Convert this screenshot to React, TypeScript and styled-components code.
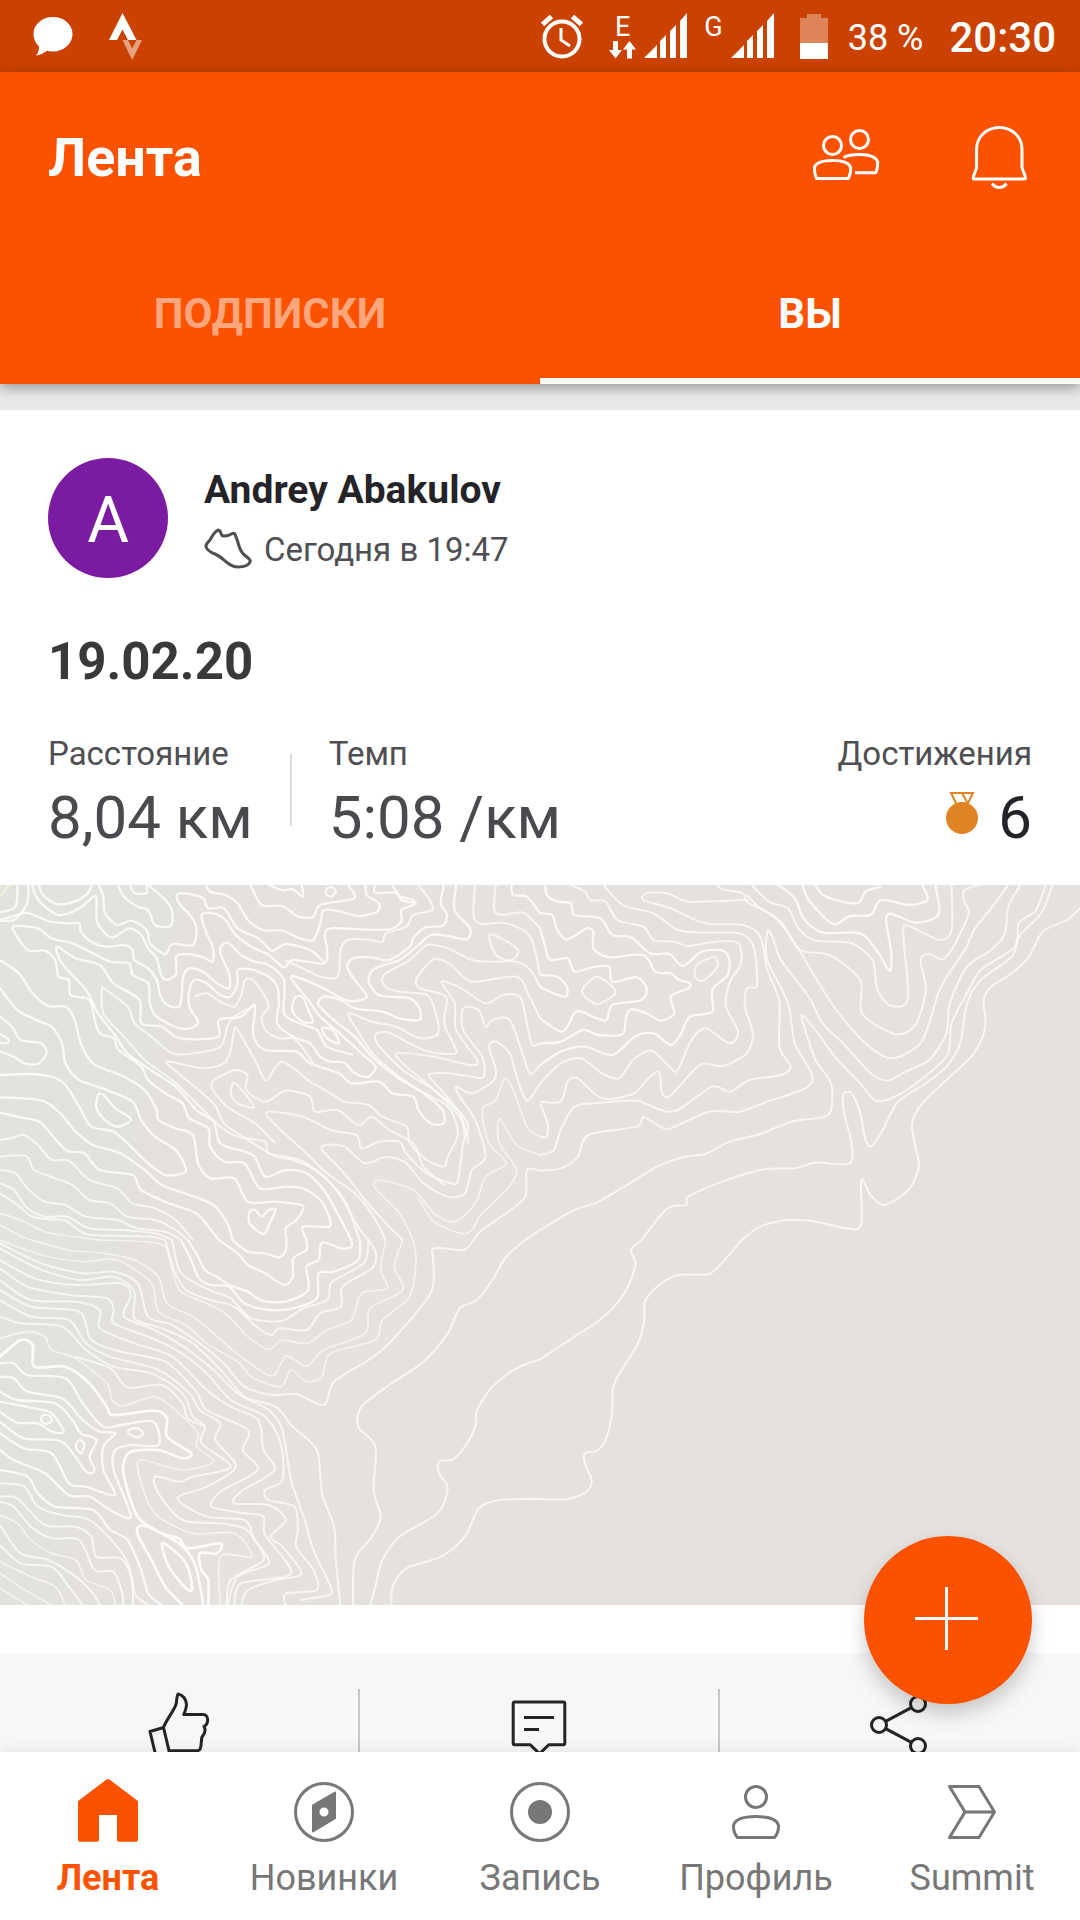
import React from "react";
import styled, { createGlobalStyle } from "styled-components";

const GlobalStyle = createGlobalStyle`
  *, *::before, *::after { box-sizing: border-box; }
  body { margin: 0; background: #ffffff; }
  body, button, a { font-family: Roboto, "Noto Sans", sans-serif; }
  button { padding: 0; border: 0; background: none; color: inherit; cursor: pointer; }
  h1, h2, p, dl, dt, dd { margin: 0; font-weight: 400; }
  svg { display: block; flex: none; }
`;

const orange = "#fc5200";

const Screen = styled.div`
  position: relative;
  display: flex;
  flex-direction: column;
  height: 100vh;
  overflow: hidden;
  background: #e9e9e9;
`;

/* ---------- Status bar ---------- */

const StatusBar = styled.div`
  display: flex;
  flex: none;
  align-items: center;
  justify-content: space-between;
  height: 72px;
  padding: 0 24px 0 33px;
  background: #cb4200;
  color: #ffffff;
`;

const StatusGroup = styled.div<{ $gap: number }>`
  display: flex;
  align-items: center;
  gap: ${(p) => p.$gap}px;
`;

const Network = styled.div`
  display: flex;
  align-items: flex-start;
  gap: 8px;
  height: 46px;
`;

const NetworkType = styled.span`
  display: flex;
  flex-direction: column;
  align-items: center;
  font: 400 27px/28px Roboto, sans-serif;
`;

const BatteryLevel = styled.span`
  font-size: 36px;
  line-height: 52px;
  padding-top: 4px;
`;

const Clock = styled.time`
  font-size: 42px;
  font-weight: 500;
  line-height: 52px;
  padding-top: 4px;
`;

/* ---------- Header ---------- */

const Header = styled.header`
  position: relative;
  z-index: 1;
  flex: none;
  background: ${orange};
  color: #ffffff;
  box-shadow: 0 4px 12px rgba(0, 0, 0, 0.35);
`;

const Toolbar = styled.div`
  display: flex;
  align-items: center;
  justify-content: space-between;
  height: 172px;
  padding: 0 45px 0 48px;
`;

const ScreenTitle = styled.h1`
  font-size: 54px;
  font-weight: 700;
  line-height: 64px;
`;

const ToolbarActions = styled.div`
  display: flex;
  gap: 81px;
`;

const Tabs = styled.div`
  display: flex;
`;

const Tab = styled.button<{ $active?: boolean }>`
  flex: 1;
  height: 140px;
  padding-bottom: 2px;
  color: ${(p) => (p.$active ? "#ffffff" : "#ffa67c")};
  font-size: 42px;
  font-weight: 700;
  box-shadow: ${(p) => (p.$active ? "inset 0 -6px #ffffff" : "none")};
`;

/* ---------- Feed ---------- */

const Feed = styled.main`
  flex: 1;
  min-height: 0;
  padding-top: 26px;
  overflow-y: auto;
  scrollbar-width: none;
`;

const Card = styled.article`
  background: #ffffff;
`;

const CardBody = styled.div`
  padding: 48px 48px 31px;
`;

const Athlete = styled.div`
  display: flex;
  gap: 36px;
`;

const Avatar = styled.div`
  display: grid;
  place-items: center;
  width: 120px;
  height: 120px;
  padding-top: 4px;
  border-radius: 50%;
  background: #7b1ba1;
  color: #ffffff;
  font-size: 64px;
`;

const AthleteName = styled.h2`
  color: #242428;
  font-size: 39px;
  font-weight: 700;
  line-height: 64px;
`;

const ActivityTime = styled.p`
  display: flex;
  align-items: center;
  gap: 12px;
  color: #4f4f53;
  font-size: 33px;
  line-height: 56px;
`;

const ActivityTitle = styled.h2`
  margin-top: 54px;
  color: #39393b;
  font-size: 51px;
  font-weight: 700;
  line-height: 60px;
`;

const Stats = styled.dl`
  display: flex;
  gap: 37px;
  margin-top: 42px;
`;

const Stat = styled.div<{ $end?: boolean }>`
  display: flex;
  flex-direction: column;
  gap: 8px;
  align-items: ${(p) => (p.$end ? "flex-end" : "flex-start")};
  margin-left: ${(p) => (p.$end ? "auto" : "0")};
`;

const StatLabel = styled.dt`
  color: #4f4f53;
  font-size: 33px;
  line-height: 40px;
`;

const StatValue = styled.dd<{ $dark?: boolean }>`
  display: flex;
  align-items: center;
  gap: 20px;
  color: ${(p) => (p.$dark ? "#242428" : "#4a4a4e")};
  font-size: 60px;
  line-height: 72px;
`;

const StatDivider = styled.div`
  width: 2px;
  height: 72px;
  margin-top: 20px;
  background: #dcdcdc;
`;

const MapView = styled.div`
  height: 720px;
  background: linear-gradient(100deg, #e2e2df 0, #e4e1de 22%);

  svg {
    width: 100%;
    height: 100%;
  }
`;

const Actions = styled.div`
  display: flex;
  margin-top: 48px;
  padding: 36px 0;
  background: #f7f7f7;
`;

const ActionButton = styled.button`
  display: flex;
  flex: 1;
  justify-content: center;
  height: 96px;
  color: #242424;

  & + & {
    box-shadow: -2px 0 #c8c8c8;
  }
`;

const Fab = styled.button`
  position: absolute;
  right: 48px;
  bottom: 216px;
  z-index: 1;
  display: grid;
  place-items: center;
  width: 168px;
  height: 168px;
  border-radius: 50%;
  background: ${orange};
  color: #ffffff;
  box-shadow: 0 10px 20px rgba(0, 0, 0, 0.2);
`;

/* ---------- Bottom navigation ---------- */

const BottomNav = styled.nav`
  position: relative;
  display: flex;
  flex: none;
  height: 168px;
  padding-top: 24px;
  background: #ffffff;
  box-shadow: 0 -2px 12px rgba(0, 0, 0, 0.07);
`;

const NavItem = styled.a<{ $active?: boolean }>`
  display: flex;
  flex: 1;
  flex-direction: column;
  align-items: center;
  gap: 8px;
  color: ${(p) => (p.$active ? orange : "#777777")};
  font-size: 36px;
  font-weight: ${(p) => (p.$active ? 700 : 400)};
  line-height: 44px;
  text-decoration: none;
`;

/* ---------- Icons ---------- */

const Icon = ({ children, size = 72, width = 3 }: { children: React.ReactNode; size?: number; width?: number }) => (
  <svg
    width={size}
    height={size}
    viewBox={`0 0 ${size} ${size}`}
    fill="none"
    stroke="currentColor"
    strokeWidth={width}
    strokeLinejoin="round"
    aria-hidden="true"
  >
    {children}
  </svg>
);

const ChatIcon = () => (
  <svg width="40" height="40" viewBox="0 0 40 40" fill="currentColor" aria-hidden="true">
    <path d="M20 1C31 1 39.500 8.500 39.500 18S31 35.500 20 35.500c-2.500 0-4.500-.3-6-.8C10 37.500 7 39 3 39.500c2-2.500 3.200-5.500 3-9C2.500 27 .5 23 .5 18 .5 8.500 9 1 20 1z" />
  </svg>
);

const StravaIcon = () => (
  <svg width="34" height="48" viewBox="0 0 34 48" fill="currentColor" aria-hidden="true">
    <path d="M13.500 1 27.500 28H19l-5.500-10.500L8 28H0z" />
    <path opacity=".5" d="M13.500 28H19l4.200 8.500L27.500 28H33l-9.800 20z" />
  </svg>
);

const AlarmIcon = () => (
  <svg width="42" height="46" viewBox="0 0 42 46" fill="none" stroke="currentColor" aria-hidden="true">
    <circle cx="21" cy="26" r="17.500" strokeWidth="4" />
    <path strokeWidth="3" d="M20 15v12l9 6" />
    <path strokeWidth="5" d="M1.500 11.500l9-8M40.500 11.500l-9-8" />
  </svg>
);

const DataArrows = () => (
  <svg width="27" height="18" viewBox="0 0 27 18" fill="currentColor" aria-hidden="true">
    <path d="M4 0h5v9h4l-6.500 8.500L0 9h4zM18 17.500h5v-9h4L20.500 0 14 8.500h4z" />
  </svg>
);

const SignalIcon = () => (
  <svg width="43" height="45" viewBox="0 0 43 45" fill="currentColor" aria-hidden="true">
    <path d="M0 45 13 32v13zM16 28l6-6v23h-6zM26 18l6-6v33h-6zM36 8l7-8v45h-7z" />
  </svg>
);

const BatteryIcon = () => (
  <svg width="28" height="45" viewBox="0 0 28 45" fill="currentColor" aria-hidden="true">
    <path opacity=".35" d="M7 0h14v4h7v25H0V4h7z" />
    <path d="M0 29h28v16H0z" />
  </svg>
);

const FriendsIcon = () => (
  <Icon>
    <circle cx="22.500" cy="23.500" r="9" />
    <circle cx="49.500" cy="17.500" r="9" />
    <path d="M6.500 56.500C5 53 4.200 49 4.400 45.500 6 40.500 14 38.500 22.500 38.500s16.500 2 18.200 7c.2 4-.8 8-2.400 11z" />
    <path d="M33.500 35.500c4-2.200 9.500-3 16-3 9 0 16.500 2.500 18.200 7.500 0 4-.5 8-2 10.800H45" />
  </Icon>
);

const BellIcon = () => (
  <Icon>
    <path d="M36.300 5.500C23.500 5.500 13.600 15 13.600 27v18c0 3-3.400 7.500-3.400 11 0 .7.4 1 1 1h50.200c.6 0 1-.3 1-1 0-3.500-3.400-8-3.400-11V27c0-12-9.900-21.500-22.700-21.500z" />
    <path d="M29 61.500c2 2.600 4.300 4 7.300 4s5.300-1.400 7.300-4" />
  </Icon>
);

const ShoeIcon = () => (
  <Icon size={48}>
    <path d="M14 4C10 6.500 8 10 6 14 4.500 16 2.500 17 1.800 20c1 4.500 5 6.500 9.200 8 9 3.500 13 13 23 13 6 0 10.500-1 12.300-5.500.3-3-4.800-5-7.800-8.500-4-5-4-11-6.500-16-.6-2.600-1.600-4.300-3.500-3.500-3.500 2-7 3.500-10.500 2C16.500 8.500 17.500 4.500 14 4z" />
  </Icon>
);

const MedalIcon = () => (
  <svg width="32" height="52" viewBox="0 0 32 52" aria-hidden="true">
    <path fill="none" stroke="#e08423" strokeWidth="2" d="M5 1h22l-6 12H11zM16 1l6 11" />
    <circle cx="16" cy="26" r="16" fill="#e08423" />
  </svg>
);

const ThumbIcon = () => (
  <Icon>
    <path d="M19.500 38.500C22 31.500 30 21.500 32 15.500c1-4 .5-8 2-10.500 5 1 8.500 5.500 8.500 10.500 0 4-1.500 6.500-2.700 10H59c3 0 4.700 2.500 4.700 5.500 0 3.500-1.200 5-3.700 6.500 1.800 3 1.800 6-2 10.500-1 3.500-.3 7.500-1.700 11.500-.6 1.500-1.800 2.200-3.300 2.200H25zM19.500 38.500 6 42.500l6 25 14-3-1.200-3" />
  </Icon>
);

const CommentIcon = () => (
  <Icon>
    <path d="M9.200 14.500c0-1 .5-1.500 1.500-1.500h48.600c1 0 1.500.5 1.500 1.500v39.700c0 1-.5 1.500-1.500 1.500H44.800l-9.200 9-9.600-9H10.700c-1 0-1.500-.5-1.500-1.500zM20 28.500h30M20 40.500h15" />
  </Icon>
);

const ShareIcon = () => (
  <Icon>
    <circle cx="15" cy="36" r="7.500" />
    <circle cx="54" cy="15" r="7.500" />
    <circle cx="54" cy="57" r="7.500" />
    <path d="M21.600 32.400l25.800-13.800M21.600 39.600l25.800 13.800" />
  </Icon>
);

const PlusIcon = () => (
  <Icon>
    <path d="M34.500 3v63M3 34.500h63" />
  </Icon>
);

const HomeIcon = () => (
  <svg width="72" height="72" viewBox="0 0 72 72" fill="currentColor" aria-hidden="true">
    <path d="M34.500 3.600c1-.8 2-.8 3 0L65.200 24.500c.5.400.8 1 .8 1.600v37.400c0 1.500-1 2.300-2.300 2.300H47.300c-1.400 0-2.300-.8-2.300-2.300V39H27v24.500c0 1.500-.9 2.300-2.300 2.300H8.300C7 65.800 6 65 6 63.500V26.100c0-.6.300-1.200.8-1.600z" />
  </svg>
);

const CompassIcon = () => (
  <Icon>
    <circle cx="36" cy="36" r="28.500" />
    <path
      fill="currentColor"
      stroke="none"
      fillRule="evenodd"
      d="M24.500 28.500 46.500 15.800c1-.5 1.500-.2 1.500.8v26.200L25.500 56.200c-1 .5-1.500.2-1.500-.8V29.500zM36 31.500a4.500 4.500 0 1 0 0 9 4.500 4.500 0 0 0 0-9z"
    />
  </Icon>
);

const RecordIcon = () => (
  <Icon>
    <circle cx="36" cy="36" r="28.500" />
    <circle cx="36" cy="36" r="12" fill="currentColor" stroke="none" />
  </Icon>
);

const ProfileIcon = () => (
  <Icon>
    <circle cx="36" cy="21" r="10.500" />
    <path d="M17.500 61.500C14.500 58 13.300 53.500 13.500 49.500 15 43 25 40.500 36 40.500s21 2.500 22.500 9c.2 4-1 8.500-4 12z" />
  </Icon>
);

const SummitIcon = () => (
  <Icon>
    <path d="M13.500 10.500H43L58.500 36 43 61.500H13.500L29 36zM29 36h29.500" />
  </Icon>
);

/* ---------- Map contours ---------- */

type Contour = [weight: number, points: string];

// Each tile is 1568 units wide and 1080 tall.
const northWest: Contour[] = [
  [3, "50,10 50,60 40,85 0,97"],
  [3, "83,10 80,65 68,90 40,120 0,122"],
  [3, "92,10 105,50 130,80 170,105 205,98 240,78 278,48 280,100 283,130 310,165 330,172 375,145 410,165 430,205 455,235 470,290 490,298 512,280 512,230 545,222 590,232 618,245 618,200 600,160 585,105 620,100 655,120 680,160 730,200 780,225 825,262 850,240 940,250 950,210 943,165 960,145 1050,148 1130,148 1165,125 1165,90 1200,75 1200,60 1160,48 1140,15"],
  [3, "112,10 125,45 165,72 215,65 255,40 268,10"],
  [3, "285,10 300,50 305,100 340,135 380,122 415,140 430,160 435,190 480,222 500,192 560,195 570,145 555,110 520,70 515,42 550,42 590,55 605,85 650,85 690,145 750,175 790,212 830,192 900,210 940,245"],
  [3, "340,10 360,50 400,80 430,90 450,135 495,138 500,95 480,60 430,15"],
  [3, "375,10 390,38 425,40 425,15"],
  [3, "597,10 610,35 655,45 690,70 720,120 765,150 820,152 870,175 910,180 930,130 940,90 990,95 1040,108 1095,95 1100,70 1065,45 1062,10"],
  [3, "725,10 760,75 820,78 865,110 910,110 930,75 1028,55 1010,15"],
  [3, "770,10 820,30 850,28 880,50 875,10"],
  [3, "950,25 965,22 975,35 960,50 946,40 950,25"],
  [3, "1090,10 1090,38 1150,38 1165,60 1210,70"],
  [2, "1210,10 1245,55 1255,90 1200,105 1180,140 1120,160 1110,185 1060,178 1010,180 990,205 980,290 930,290 890,270 825,240"],
  [3, "0,120 40,108 75,98 110,110 145,125 200,130 230,130 235,155 265,185 310,200 360,195 385,210 390,240 430,265 455,300 465,345 485,375 520,380 528,340 532,290 550,265 590,275 630,310 665,325 665,280 640,220 645,195 665,190 700,225 740,245 780,255 825,300 825,400 870,430 920,450 950,500 1025,525"],
  [3, "1290,10 1280,70 1298,105 1285,138 1235,142 1200,175 1190,200 1130,240 1080,232 1025,235 1008,260 1030,300 1065,350 1010,362 930,320 850,288 855,310 895,360 930,410 980,455 1050,520 1090,560 1070,590 1030,580 1000,548 960,545 930,530 900,490 850,470 805,430 810,370 805,320 780,290 730,268 690,270 690,310 670,350 640,345 600,310 565,300 550,330 550,380 575,425 560,442 520,445 455,410 435,370 430,310 385,285 375,250 320,245 270,220 210,190 150,175 110,145 45,138 38,150 80,210 130,212 160,240 170,290 200,300 205,345 260,360 275,420 290,460 330,475 345,510 410,560 430,600 480,640 530,670 550,715 605,745 610,800 650,845 710,850 755,925 830,920 880,925 930,960 955,1010 955,1040 880,1040 890,1080"],
  [3, "1325,10 1320,90 1365,145 1355,178 1300,168 1250,165 1210,200 1160,240 1090,265 1070,300 1100,345 1190,355 1218,385 1218,420 1160,415 1110,395 1030,385 990,360 940,350 925,375 975,425 1030,470 1080,530 1150,590 1230,640 1285,690 1288,730 1250,730 1215,690 1200,650 1140,640 1100,605 1020,610 985,580 900,550 860,515 770,510 735,465 740,375 700,410 635,420 635,470 560,478 510,470 470,440 410,430 405,360 330,310 290,255 220,235 165,200 180,250 250,330 285,400 330,460 370,520 430,565 510,620 570,690 620,725 640,790 710,815 740,830 770,890 830,870 890,880 940,930 980,1000 1020,1080"],
  [2, "1380,10 1375,110 1400,132 1470,130 1540,170 1568,285"],
  [2, "1440,10 1435,90 1460,105 1520,98 1568,145"],
  [3, "1485,10 1490,45 1530,50 1568,100"],
  [2, "1420,165 1455,175 1505,210 1485,240 1440,225 1420,165"],
  [2, "1568,320 1540,270 1500,245 1430,245 1370,240 1300,205 1240,195 1190,240 1115,285 1118,320 1160,335 1240,345 1265,400 1272,460 1220,475 1150,440 1080,425 1012,400 1040,455 1090,530 1200,620 1300,680 1330,760 1300,830 1290,860 1240,840 1190,790 1180,740 1110,710 1070,675 1000,665 960,640 900,605 860,570 820,545 800,560 772,602 740,540 690,450 680,450 670,510 650,550 590,565 485,545 530,590 620,670 650,730 720,780 800,830 850,840 930,880 990,950 1040,1040 1070,1080"],
  [2, "1568,415 1535,345 1500,290 1370,305 1310,255 1260,238 1210,295 1220,325 1295,350 1290,430 1325,510 1310,522 1245,515 1190,490 1130,458 1095,460 1095,490 1170,570 1260,630 1330,690 1360,740 1345,790 1330,900 1310,910 1240,880 1180,820 1160,785 1100,785 1050,805 1035,765 960,750 880,710 775,695 800,735 890,820 950,880 1030,940 1085,1010 1120,1080"],
  [2, "1568,490 1545,495 1530,430 1510,350 1460,345 1410,370 1340,325 1282,305 1320,370 1325,450 1385,540 1365,555 1260,530 1150,520 1180,560 1250,620 1310,680 1350,740 1360,790"],
  [2, "1568,555 1540,582 1520,530 1480,420 1430,420 1410,440 1390,390 1345,385 1345,450 1400,530 1405,590 1370,590 1300,580 1245,585 1290,640 1340,710 1350,780"],
  [2, "1568,610 1530,662 1500,590 1480,520 1440,485 1420,500 1440,570 1430,605 1370,640 1325,620 1335,650 1380,720 1410,830 1370,870 1350,940 1300,950 1230,910 1180,850 1120,830 1060,850 1000,800 950,795 935,810 1000,880 1060,960 1130,1040 1170,1080"],
  [1, "1568,770 1530,740 1490,630 1465,595 1440,660 1400,690 1420,790 1470,850 1410,890 1380,970 1320,1025 1260,1000 1200,930 1100,900 1090,925 1160,1000 1200,1080"],
  [1, "1568,825 1500,795 1450,715 1450,790 1500,870 1470,930 1400,1000 1370,1050 1340,1060 1260,1025 1215,955"],
  [2, "1568,872 1530,870 1525,950 1470,1000 1400,1050 1375,1080"],
  [2, "1568,1050 1525,1080"],
  [2, "295,325 300,400 360,470 420,540 500,600 590,690 640,740 690,770 770,785 780,820 870,840 940,890 1000,960 1045,1080"],
  [2, "295,320 370,380 390,430 440,470 500,520 560,520 640,500 660,440 680,410 735,380"],
  [2, "565,350 600,340 640,365 680,380 700,345 712,300 740,305 780,375 760,410 770,450 810,475 850,475 880,505 910,550"],
  [2, "620,600 680,570 718,585 715,630 770,665 830,632 900,650 915,695 980,690 1040,735 1080,710 1130,750 1200,790 1230,860 1290,915"],
  [2, "620,600 615,625 660,680 740,730 800,790"],
  [2, "680,608 670,640 690,670 738,682 710,640 680,608"],
  [3, "855,355 850,395 880,425 908,425 895,390 878,350 855,355"],
  [3, "935,445 950,475 985,490 965,450 935,445"],
  [3, "0,240 55,280 95,340 140,378 190,380 215,415 235,490 270,550 360,590 420,630 455,690 460,720 510,745 560,765 575,850 610,895 680,895 720,965 800,965 880,978 860,1020 830,1045 832,1080"],
  [3, "0,325 50,390 110,422 150,440 180,490 190,550 230,600 310,630 385,665 410,720 450,770 510,810 540,865 530,880 480,885 430,850 380,800 330,755 265,740 230,680 190,615 150,590 80,582 0,585"],
  [3, "0,410 35,440 60,480 120,490 135,520 110,552 70,550 40,530 0,515"],
  [3, "0,462 25,478 20,490 0,488"],
  [3, "285,645 300,645 335,685 380,718 345,740 310,725 280,685 285,645"],
  [3, "0,652 70,655 130,665 180,705 220,755 270,795 350,820 420,870 470,915 550,945 620,975 660,1030 675,1080"],
  [3, "0,698 60,712 115,725 150,765 195,812 245,820 290,870 385,885 410,930 490,970 570,1000 620,1060 635,1080"],
  [2, "0,780 30,775 70,765 110,795 150,840 200,842 260,900 340,925 385,970 450,985 510,1020 560,1080"],
  [2, "0,830 75,828 100,870 160,895 210,915 260,960 320,970 370,1010 450,1020 510,1050 545,1080"],
  [2, "0,870 45,880 80,925 130,965 190,975 250,1010 340,1020 400,1045 480,1055 525,1080"],
  [2, "0,910 40,930 80,985 130,1010 195,1010 260,1045 360,1050 450,1060 500,1080"],
  [2, "0,940 45,970 90,1008 140,1018 190,1022 250,1062 360,1068 440,1070 480,1080"],
  [1, "0,1000 60,1020 130,1055 200,1068 290,1080"],
  [1, "0,1035 60,1068 90,1080"],
  [3, "725,995 725,1030 765,1062 785,1025 800,990 780,990 760,1010 740,990 725,995"],
];

const northEast: Contour[] = [
  [3, "0,100 35,105 50,150 75,178 105,165 135,145 155,155 155,205 200,232 300,225 335,275 380,280 400,298 435,310 430,325 380,350 390,400 350,422 310,400 265,388 250,410 240,462 170,465 125,450 60,485 0,490"],
  [3, "15,10 20,45 50,65 90,70 100,105 175,115 210,165 265,172 320,220 375,222 415,258 470,215 530,212 550,240 545,285 500,330 500,395 435,410 410,460 380,495 330,460 275,470 210,525 130,500 60,515 0,555"],
  [2, "78,10 130,35 145,60 190,65 225,120 300,140 330,180 390,185 430,198 510,185 575,188 583,250 550,310 540,380 575,455 550,490 480,445 440,480 400,570 380,565 325,512 270,540 230,595 180,580 120,535 60,550 0,610"],
  [2, "180,10 240,75 330,100 400,150 480,158 580,160 620,200 630,315 600,325 595,380 618,460 600,520 530,558 465,555 380,645 355,640 345,575 310,600 270,642 180,655 110,595 80,605 60,665 0,665"],
  [2, "510,10 530,28 590,40 600,65 680,110 740,190 790,275 850,375 940,485 1020,535 1100,495 1130,430 1160,330 1200,260 1240,200"],
  [2, "605,60 550,62 430,65 370,40 310,40 300,60 380,85 480,130 590,135 640,170 660,270 695,365 695,500 728,560 700,585 610,600 550,635 500,620 400,690 350,690 280,662 160,670 100,680 60,750 40,810 0,825"],
  [2, "0,670 22,730 20,770 0,770"],
  [2, "600,45 640,85 700,125 755,210 840,225 930,300 935,400 1030,462 1090,435 1120,330 1105,240 1130,222 1170,238 1200,200 1245,100 1230,60 1235,28 1300,10"],
  [2, "1240,200 1260,150 1310,85 1360,15"],
  [2, "610,10 665,65 720,85 750,145 800,182 900,188 965,240 980,330 1020,378 1068,355 1055,160 1070,138 1160,180 1195,150 1195,15"],
  [3, "685,10 740,55 765,115 820,158 930,160 980,215 1015,272 1020,220 1005,120 1020,102 1090,128 1145,115 1160,90 1148,15"],
  [3, "762,10 780,60 850,132 900,108 960,105 990,60 1070,75 1125,60 1110,15"],
  [3, "795,10 830,50 920,70 945,35 990,20"],
  [2, "1398,10 1360,80 1350,160 1310,210 1240,260 1190,370 1180,460 1130,540 1060,575 1010,602 960,580 880,490 820,430 780,350 700,240 675,170 660,155 660,240 720,370 740,490 790,585 770,625 660,665 580,695 490,695 380,745 350,740 300,712 280,740 140,765 110,830 60,865 0,872"],
  [2, "1470,10 1440,90 1390,130 1380,200 1280,270 1240,340 1195,430 1185,520 1130,580 1040,645 975,662 930,610 860,535 800,450 760,405 770,450 800,540 845,610 845,690 820,712 730,725 640,762 550,785 480,822 420,830 340,860 260,910 170,965 100,990 0,1050"],
  [2, "1490,10 1455,100 1390,170 1370,230 1280,300 1240,370 1220,490 1180,560 1120,610 1040,665 1000,740 965,798 945,780 930,700 905,640 880,645 885,710 903,780 900,850 800,848 740,865 650,868 530,905 430,950 425,975 370,985 295,1080"],
  [2, "1568,85 1530,120 1460,155 1420,230 1370,280 1310,320 1288,360 1293,440 1260,520 1180,600 1110,670 1080,730 1090,800 1100,860 1070,930 1000,975 960,945 933,900 932,1035 890,1045 800,1025 720,1020 640,1040 585,1080"],
  [3, "0,285 50,290 78,320 75,350 40,340 0,320"],
  [2, "165,290 215,325 215,345 165,372 122,335 165,290"],
  [3, "0,145 15,200 30,240 80,235 100,275 150,262 200,260 210,305 280,292 310,325 295,360 210,375 190,422 120,395 100,400 65,455 0,415"],
  [2, "510,232 515,260 475,302 450,290 455,255 490,235 510,232"],
];

const southWest: Contour[] = [
  [3, "635,0 690,40 720,75 770,100 825,135 850,110 852,55 890,30 890,0"],
  [3, "675,0 720,35 770,40 810,52 830,30 832,0"],
  [3, "545,0 570,40 595,90 630,110 665,135 720,155 760,182 830,185 895,150 890,80 925,60 935,8 990,25 1020,20 1020,0"],
  [3, "525,0 555,60 575,110 610,135 665,140 710,190 780,210 850,205 920,175 925,100 970,95 1040,60 1045,0"],
  [2, "500,0 520,90 560,125 620,155 670,175 730,235 820,242 880,205 950,180 960,130 1000,105 1060,65 1070,0"],
  [2, "480,0 505,90 540,150 610,180 680,200 750,265 790,285 810,265 890,270 930,220 990,200 995,140 1080,85 1092,40 1070,0"],
  [1, "290,0 420,5 480,20 500,90 525,155 600,190 660,225 720,290 780,328 820,300 890,310 950,270 1020,240 1050,160 1125,145 1105,90 1120,0"],
  [1, "90,0 200,30 300,40 390,60 460,110 485,190 560,230 620,280 700,350 790,408 830,348 890,378 940,330 1060,280 1075,205 1170,150 1145,80 1170,0"],
  [1, "0,0 120,45 240,65 340,60 440,130 460,215 540,255 600,310 690,365 730,410 815,440 845,390 890,425 935,410 960,340 1090,300 1110,240 1190,170 1208,60 1200,0"],
  [2, "0,10 120,70 240,100 330,95 400,130 430,230 500,255 580,310 650,370 710,440 790,465 860,462 940,495 970,425 1070,360 1130,310 1250,160 1258,60 1260,25 1345,30 1375,0"],
  [2, "0,25 110,85 230,120 330,110 390,155 390,235 470,265 560,310 650,400 710,470 800,500 850,560 920,630 935,760 970,860 975,960 988,1095"],
  [2, "0,60 100,115 220,135 350,130 380,165 360,230 450,270 540,325 620,390 690,460 780,510 820,570 845,720 885,840 910,930 960,1040 955,1065 870,1080"],
  [2, "0,85 80,140 200,165 310,175 330,210 330,250 430,290 520,335 600,400 670,480 770,530 815,610 820,720 770,750 780,780 855,800 865,870 860,920 910,990 920,1050 830,1060 828,1095"],
  [2, "0,120 90,180 220,185 290,210 290,265 390,310 500,350 600,450 670,500 750,540 765,630 797,690 700,755 680,790 780,795 830,840 785,890 820,920 875,1000 800,1020 720,1050 700,1095"],
  [2, "0,150 90,200 230,215 265,300 350,335 480,365 570,455 600,510 720,570 705,630 748,690 640,755 615,800 710,820 765,830 770,885 845,1000 700,1030 680,1095"],
  [2, "0,180 90,230 200,240 250,310 320,350 460,390 550,460 580,510 640,550 625,600 685,680 600,740 515,775 600,830 710,840 740,900 780,970 690,1010 660,1095"],
  [2, "0,230 60,250 180,260 250,330 330,380 440,400 530,460 560,530 595,560 585,610 670,680 560,710 520,725 450,710 460,760 530,840 640,850 710,865 740,900 765,960 670,1020 658,1095"],
  [1, "0,295 80,275 130,290 150,330 220,355 310,430 325,480 360,498 450,470 520,520 575,580 570,620 620,665 530,690 410,660 405,710 450,820 560,880 680,880 730,950 640,950 640,1095"],
  [2, "215,350 320,385 370,442 470,435 530,490 545,535 595,560"],
  [4, "0,350 60,300 95,315 100,380 190,380 260,430 310,500 330,525 450,512 485,535 485,590 555,640 530,655 460,630 380,635 360,665 360,710 400,830 470,880 520,895 545,925 640,910 630,940 580,940 585,990 605,1020 605,1095"],
  [3, "0,370 40,370 80,405 190,415 240,490 300,560 350,555 445,545 460,615 380,615 335,630 330,690 380,830 320,810 260,770 200,765 130,700 40,660 0,630"],
  [3, "0,410 40,415 80,455 180,475 240,540 290,575 335,580 300,620 300,690 333,765 250,740 200,730 150,640 70,625 0,580"],
  [3, "0,455 50,480 160,490 210,540 235,580 280,600 260,650 275,690 250,695 180,605 70,595 0,545"],
  [3, "0,485 100,505 150,520 185,575 150,575 110,550 50,548 0,515"],
  [3, "125,525 145,528 150,542 135,552 120,542 125,525"],
  [3, "230,600 245,612 235,640 220,620 230,600"],
  [3, "375,570 400,565 415,580 400,593 375,582 375,570"],
  [3, "0,690 80,710 110,760 160,800 270,810 320,870 370,900 410,990 430,1060 470,1095"],
  [2, "0,730 70,740 110,800 180,825 260,840 340,920 375,980 390,1060 430,1095"],
  [2, "0,770 50,775 130,855 220,860 265,890 280,950 350,955 385,1020 385,1095"],
  [2, "0,785 40,800 90,860 150,895 230,900 275,990 330,995 355,1060 358,1095"],
  [1, "0,825 50,850 90,900 150,940 220,960 250,1020 320,1050 335,1095"],
  [2, "0,855 60,940 140,960 220,1010 270,1060 290,1095"],
  [2, "0,915 60,970 150,980 200,1040 240,1095"],
  [1, "0,965 90,1010 160,1040 190,1095"],
  [1, "0,1000 80,1055 150,1095"],
  [1, "0,1045 80,1095"],
  [4, "400,860 430,860 520,910 555,950 570,985 585,1060 590,1095"],
  [4, "400,860 400,885 440,960 480,1040 530,1095"],
  [4, "470,915 485,915 540,970 558,1045 540,1045 490,980 470,915"],
  [2, "1525,0 1470,50 1430,120 1385,180 1335,205 1300,280 1230,365 1130,435 1050,500 1040,560 1090,620 1085,750 1105,830 1080,890 1030,960 1025,1095"],
  [2, "1568,358 1500,385 1430,440 1385,510 1380,560 1350,620 1315,658 1275,665 1275,700 1300,745 1270,820 1160,890 1110,960 1090,1040 1075,1095"],
  [2, "1568,777 1450,780 1390,805 1350,890 1280,950 1180,985 1140,1040 1137,1095"],
];

const southEast: Contour[] = [
  [2, "295,0 265,30 277,75 245,160 180,235 100,290 0,358"],
  [2, "585,0 540,55 490,102 400,105 340,140 305,185 302,245 285,310 240,385 213,440 208,530 190,600 165,632 130,640 130,670 150,720 135,755 80,777 0,777"],
];

// Turns a list of survey points into a smooth curve that runs through each of them.
function smooth(points: string): string {
  const p = points.split(" ").map((pair) => pair.split(",").map(Number));
  const last = p.length - 1;
  const closed = p[0][0] === p[last][0] && p[0][1] === p[last][1];
  let d = `M${p[0][0]} ${p[0][1]}`;
  for (let i = 0; i < last; i++) {
    const before = p[i - 1] ?? (closed ? p[last - 1] : p[i]);
    const after = p[i + 2] ?? (closed ? p[1] : p[i + 1]);
    const a = p[i];
    const b = p[i + 1];
    const c1 = [a[0] + (b[0] - before[0]) / 7, a[1] + (b[1] - before[1]) / 7];
    const c2 = [b[0] - (after[0] - a[0]) / 7, b[1] - (after[1] - a[1]) / 7];
    d += `C${c1[0]} ${c1[1]} ${c2[0]} ${c2[1]} ${b[0]} ${b[1]}`;
  }
  return d;
}

const Tile = ({ x, y, contours }: { x: number; y: number; contours: Contour[] }) => (
  <g transform={`translate(${x} ${y})`}>
    {contours.map(([weight, points], i) => (
      <path key={i} d={smooth(points)} strokeWidth={4 + weight} opacity={0.52 + weight * 0.12} />
    ))}
  </g>
);

const ContourMap = () => (
  <svg viewBox="0 15 3136 2160" preserveAspectRatio="none" fill="none" stroke="#fdfcfa" role="img" aria-label="Карта">
    <Tile x={0} y={0} contours={northWest} />
    <Tile x={1568} y={0} contours={northEast} />
    <Tile x={0} y={1080} contours={southWest} />
    <Tile x={1568} y={1080} contours={southEast} />
    <path d="M0 50 26 15" stroke="#eef0d8" strokeWidth="8" />
  </svg>
);

/* ---------- Screen ---------- */

const navItems = [
  { label: "Лента", icon: <HomeIcon />, active: true },
  { label: "Новинки", icon: <CompassIcon /> },
  { label: "Запись", icon: <RecordIcon /> },
  { label: "Профиль", icon: <ProfileIcon /> },
  { label: "Summit", icon: <SummitIcon /> },
];

export default function App() {
  return (
    <Screen>
      <GlobalStyle />
      <StatusBar>
        <StatusGroup $gap={36}>
          <ChatIcon />
          <StravaIcon />
        </StatusGroup>
        <StatusGroup $gap={20}>
          <StatusGroup $gap={26}>
            <AlarmIcon />
            <StatusGroup $gap={17}>
              <Network>
                <NetworkType>
                  E
                  <DataArrows />
                </NetworkType>
                <SignalIcon />
              </Network>
              <Network>
                <NetworkType>G</NetworkType>
                <SignalIcon />
              </Network>
            </StatusGroup>
            <BatteryIcon />
          </StatusGroup>
          <StatusGroup $gap={26}>
            <BatteryLevel>38 %</BatteryLevel>
            <Clock>20:30</Clock>
          </StatusGroup>
        </StatusGroup>
      </StatusBar>

      <Header>
        <Toolbar>
          <ScreenTitle>Лента</ScreenTitle>
          <ToolbarActions>
            <button type="button" aria-label="Друзья">
              <FriendsIcon />
            </button>
            <button type="button" aria-label="Уведомления">
              <BellIcon />
            </button>
          </ToolbarActions>
        </Toolbar>
        <Tabs role="tablist">
          <Tab type="button" role="tab" aria-selected="false">
            ПОДПИСКИ
          </Tab>
          <Tab type="button" role="tab" aria-selected="true" $active>
            ВЫ
          </Tab>
        </Tabs>
      </Header>

      <Feed>
        <Card>
          <CardBody>
            <Athlete>
              <Avatar>A</Avatar>
              <div>
                <AthleteName>Andrey Abakulov</AthleteName>
                <ActivityTime>
                  <ShoeIcon />
                  Сегодня в 19:47
                </ActivityTime>
              </div>
            </Athlete>
            <ActivityTitle>19.02.20</ActivityTitle>
            <Stats>
              <Stat>
                <StatLabel>Расстояние</StatLabel>
                <StatValue>8,04 км</StatValue>
              </Stat>
              <StatDivider />
              <Stat>
                <StatLabel>Темп</StatLabel>
                <StatValue>5:08 /км</StatValue>
              </Stat>
              <Stat $end>
                <StatLabel>Достижения</StatLabel>
                <StatValue $dark>
                  <MedalIcon />6
                </StatValue>
              </Stat>
            </Stats>
          </CardBody>
          <MapView>
            <ContourMap />
          </MapView>
          <Actions>
            <ActionButton type="button" aria-label="Нравится">
              <ThumbIcon />
            </ActionButton>
            <ActionButton type="button" aria-label="Комментировать">
              <CommentIcon />
            </ActionButton>
            <ActionButton type="button" aria-label="Поделиться">
              <ShareIcon />
            </ActionButton>
          </Actions>
        </Card>
      </Feed>

      <Fab type="button" aria-label="Добавить">
        <PlusIcon />
      </Fab>

      <BottomNav>
        {navItems.map(({ label, icon, active }) => (
          <NavItem key={label} href="#" $active={active} aria-current={active ? "page" : undefined}>
            {icon}
            {label}
          </NavItem>
        ))}
      </BottomNav>
    </Screen>
  );
}
